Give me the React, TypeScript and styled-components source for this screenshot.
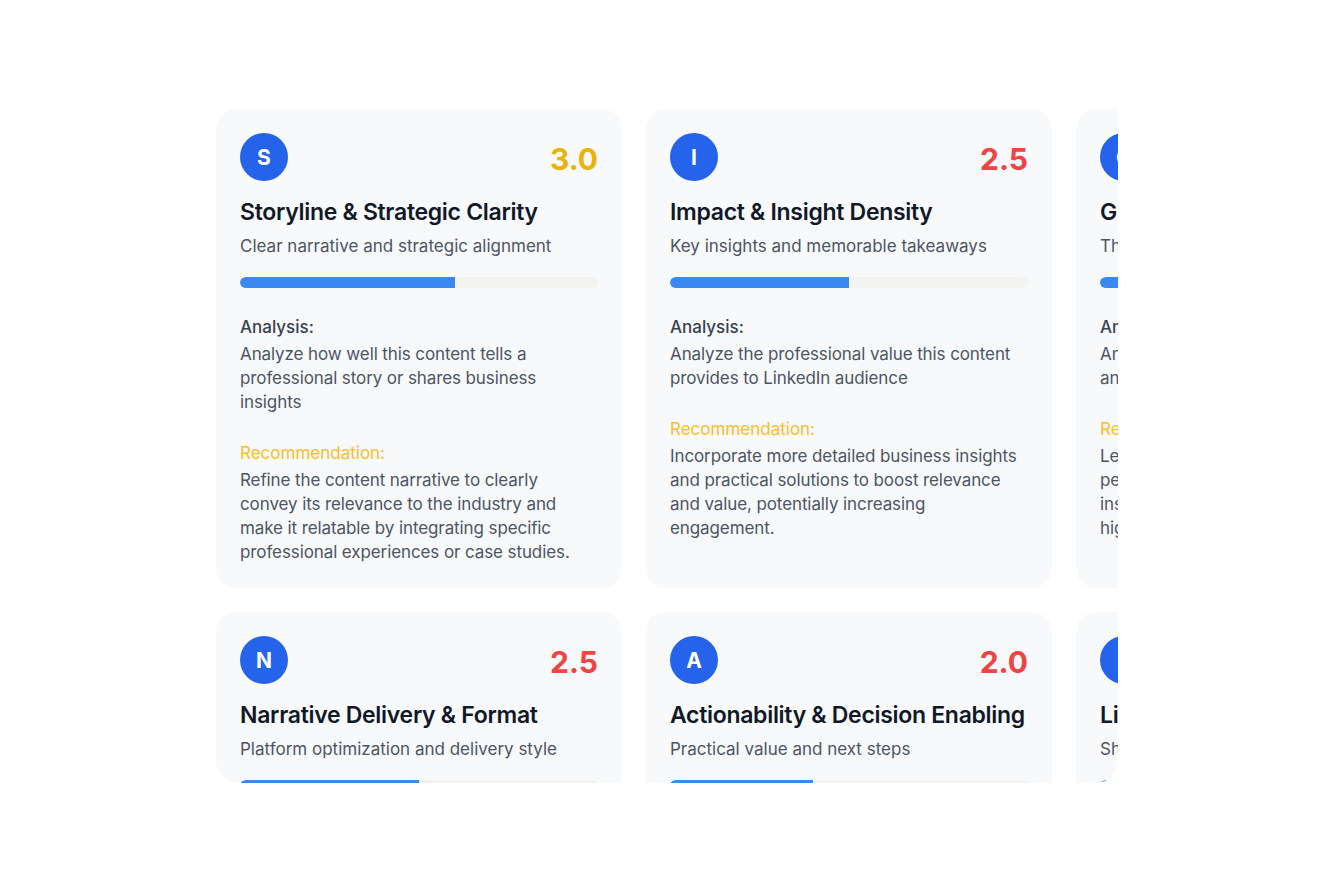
import React, { FC } from 'react'
import styled, { createGlobalStyle } from 'styled-components'

const GlobalStyle = createGlobalStyle`
  html, body {
    margin: 0;
    padding: 0;
    background: #ffffff;
    font-family: Inter, "Noto Sans", "Liberation Sans", sans-serif;
  }
`

type Criterion = {
  letter: string
  title: string
  subtitle: string
  score: number
  analysis: string
  recommendation: string
}

const CRITERIA: Criterion[] = [
  {
    letter: 'S',
    title: 'Storyline & Strategic Clarity',
    subtitle: 'Clear narrative and strategic alignment',
    score: 3.0,
    analysis:
      'Analyze how well this content tells a professional story or shares business insights',
    recommendation:
      'Refine the content narrative to clearly convey its relevance to the industry and make it relatable by integrating specific professional experiences or case studies.',
  },
  {
    letter: 'I',
    title: 'Impact & Insight Density',
    subtitle: 'Key insights and memorable takeaways',
    score: 2.5,
    analysis: 'Analyze the professional value this content provides to LinkedIn audience',
    recommendation:
      'Incorporate more detailed business insights and practical solutions to boost relevance and value, potentially increasing engagement.',
  },
  {
    letter: 'G',
    title: 'Grammar & Readability',
    subtitle: 'The overall quality of the writing',
    score: 3.0,
    analysis: 'Analyze the overall writing quality, clarity and readability',
    recommendation:
      'Leverage shorter sentences and unique perspectives from real experiences and insights to improve readability and highlighting the key takeaways.',
  },
  {
    letter: 'N',
    title: 'Narrative Delivery & Format',
    subtitle: 'Platform optimization and delivery style',
    score: 2.5,
    analysis: 'Analyze how the post is formatted for the LinkedIn feed',
    recommendation: 'Use line breaks and a strong opening hook to improve delivery.',
  },
  {
    letter: 'A',
    title: 'Actionability & Decision Enabling',
    subtitle: 'Practical value and next steps',
    score: 2.0,
    analysis: 'Analyze whether readers know what to do next',
    recommendation: 'Close with a clear call to action or next step.',
  },
  {
    letter: 'L',
    title: 'LinkedIn Engagement Potential',
    subtitle: 'Shareability and audience reaction',
    score: 2.5,
    analysis: 'Analyze the likelihood of comments and shares',
    recommendation: 'Ask a question to invite discussion.',
  },
]

const Page = styled.div`
  padding: 109px 0 0 216px;
`

const Viewport = styled.div`
  width: 902px;
  height: 674px;
  overflow: hidden;
  border-radius: 0 0 22px 22px;
`

const Grid = styled.div`
  display: grid;
  grid-template-columns: repeat(3, 406px);
  gap: 24px;
  align-items: stretch;
`

const Card = styled.div`
  background: #f8f9fb;
  border-radius: 20px;
  padding: 24px;
  display: flex;
  flex-direction: column;
`

const Header = styled.div`
  display: flex;
  align-items: center;
  justify-content: space-between;
  height: 48px;
`

const Avatar = styled.div`
  width: 48px;
  height: 48px;
  border-radius: 50%;
  background: #2563eb;
  color: #ffffff;
  display: flex;
  align-items: center;
  justify-content: center;
  font-size: 21px;
  font-weight: 700;
`

const Score = styled.div<{ $tone: 'warn' | 'bad' }>`
  font-size: 30px;
  line-height: 36px;
  padding-top: 3px;
  font-weight: 700;
  color: ${p => (p.$tone === 'warn' ? '#eab308' : '#ef4444')};
`

const Title = styled.h3`
  margin: 17px 0 0;
  font-size: 23px;
  line-height: 28px;
  font-weight: 600;
  color: #111827;
  letter-spacing: -0.3px;
  white-space: nowrap;
`

const Subtitle = styled.p`
  margin: 8px 0 0;
  font-size: 17px;
  line-height: 24px;
  color: #4b5563;
`

const Track = styled.div`
  margin-top: 19px;
  height: 11px;
  border-radius: 6px;
  background: #f3f3f1;
  overflow: hidden;
`

const Fill = styled.div`
  height: 100%;
  background: #3b89f0;
  border-radius: 6px 0 0 6px;
`

const Label = styled.div<{ $accent?: boolean }>`
  margin-top: 27px;
  font-size: 17px;
  line-height: 24px;
  font-weight: ${p => (p.$accent ? 400 : 500)};
  color: ${p => (p.$accent ? '#fbbf24' : '#374151')};
`

const Body = styled.p`
  margin: 3px 0 0;
  font-size: 17px;
  line-height: 24px;
  letter-spacing: -0.1px;
  color: #4b5563;
`

const ScoreCard: FC<{ item: Criterion }> = ({ item }) => (
  <Card>
    <Header>
      <Avatar>{item.letter}</Avatar>
      <Score $tone={item.score >= 3 ? 'warn' : 'bad'}>{item.score.toFixed(1)}</Score>
    </Header>
    <Title>{item.title}</Title>
    <Subtitle>{item.subtitle}</Subtitle>
    <Track>
      <Fill style={{ width: `${(item.score / 5) * 100}%` }} />
    </Track>
    <Label>Analysis:</Label>
    <Body>{item.analysis}</Body>
    <Label $accent>Recommendation:</Label>
    <Body>{item.recommendation}</Body>
  </Card>
)

const App: FC = () => (
  <>
    <GlobalStyle />
    <Page>
      <Viewport>
        <Grid>
          {CRITERIA.map(item => (
            <ScoreCard key={item.letter} item={item} />
          ))}
        </Grid>
      </Viewport>
    </Page>
  </>
)

export default App
